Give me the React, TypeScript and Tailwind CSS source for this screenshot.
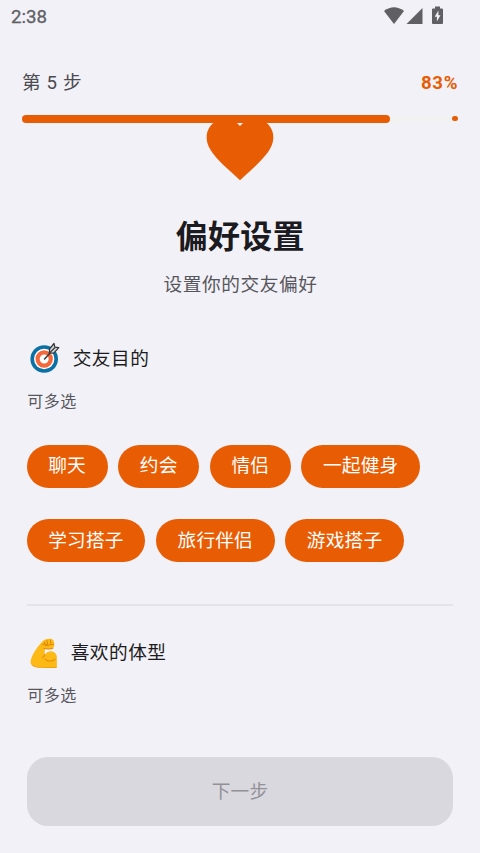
const FONT = "font-['Roboto','Noto_Sans_CJK_SC',sans-serif]";

function Chip({ label }: { label: string }) {
  return (
    <button className="flex h-[43px] items-center rounded-full bg-[#e85d04] px-[21.6px] text-[18.67px] leading-none tracking-[0.2px] text-white">
      <span className="mt-px">{label}</span>
    </button>
  );
}

function TargetIcon() {
  return (
    <svg className="mt-px h-[32px] w-[32px] shrink-0" viewBox="0 0 32 32" fill="none">
      <circle cx="15.2" cy="17" r="13.8" fill="#0b70a4" />
      <circle cx="15.2" cy="17" r="10.2" fill="#fff" />
      <circle cx="15.2" cy="17" r="6.6" stroke="#f4693b" strokeWidth="4.2" />
      <path d="M15.2 17.500 26 5.500" stroke="#3a3a3a" strokeWidth="1.500" />
      <path d="M20.300 11.200 20.600 6.800 25 1.500l.9 3.600 3.900.500-4.800 5.300z" fill="#c9cfd3" stroke="#333" strokeWidth="1.200" strokeLinejoin="round" />
      <path d="m20.300 11.200 5.600-5.600" stroke="#333" strokeWidth="1.200" />
    </svg>
  );
}

function BicepsIcon() {
  return (
    <svg className="h-[32px] w-[32px] shrink-0" viewBox="0 0 33 32" fill="none">
      <path d="M12.500 4.500C14 2.200 17 1.200 20 1.200c3.200 0 4.600 1.500 4.900 4.300.3 2.500 0 4.800-1.400 5.700-2 1.300-5.500.3-7.800.3-.8 2-.7 4-.2 6.200 2.500-3.800 6-4.200 8.900-2.700 2.300 1.200 3.300 3 3.300 5.500v10.200c-4 .8-8 .5-12 .1-4.500 0-8-.3-11.500-1.200C.8 28.600 0 26.200.9 23 2.700 16.500 7.700 9.500 12.500 4.500z" fill="#fdb915" />
      <path d="M13 7.500c1.500-1 2.500-1 4-.4M14.500 11.300c3 .2 6 1.200 9-.1M17.500 3.200l.8 4.300M21 2.600l.6 4.600M15 4.800l1.200 3.700 8-1.500" stroke="#df8a0c" strokeWidth="1.100" strokeLinecap="round" />
      <path d="M15.500 17.700c-.8 1.500-1.500 2.300-2.500 3M15.500 22.200c2.500 2.800 7.500 2.800 10.500.3" stroke="#e8940f" strokeWidth="1.200" strokeLinecap="round" />
      <path d="M1.500 27.500c2.500 2 6 2.700 10 2.600 5 .4 10 .6 16.200 0v1c-7 .6-11 .5-15 .1C7 31.100 2.500 30.500 1.500 27.500z" fill="#f29f0c" />
    </svg>
  );
}

export default function App() {
  return (
    <div className={`flex h-[853px] w-[480px] flex-col overflow-hidden bg-[#f2f1f7] ${FONT}`}>
      <header className="flex h-[33px] items-center justify-between pl-[11px] pr-[36px] text-[#606064]">
        <span className="mt-px text-[18.67px] leading-none [-webkit-text-stroke:0.3px]">2:38</span>
        <svg className="-mt-[2px] h-[22px] w-[60px]" viewBox="0 0 60 22" fill="currentColor">
          <path d="M0 6Q10 -1.500 20 6L10 19z" />
          <path d="M38.500 3v16h-16z" />
          <path fillRule="evenodd" d="M51 1.500h5v2h2q1 0 1 1V18q0 1-1 1h-9q-1 0-1-1V4.500q0-1 1-1h2zM54.400 5.500l-3.700 6.200h2.200v4.800l3.600-6.300h-2.100z" />
        </svg>
      </header>
      <div className="flex h-[81.5px] shrink-0 items-center justify-between pl-[22px] pr-[22px] pt-[19px] text-[18.67px] leading-none tracking-[0.67px]">
        <span className="text-[#4a4a50]">第 5 步</span>
        <span className="-mr-[0.2px] font-bold text-[#e85d04]">83%</span>
      </div>
      <div className="mx-[21.5px] flex h-[8.5px] shrink-0 items-center justify-between rounded-full bg-[#f2f2f2] pr-px">
        <div className="h-full w-[368.5px] rounded-full bg-[#e85d04]" />
        <div className="size-[5.3px] rounded-full bg-[#e85d04]" />
      </div>
      <main className="flex flex-1 flex-col overflow-hidden px-[26.67px]">
        <svg className="-mt-[14.2px] size-[80px] shrink-0 self-center" viewBox="0 0 24 24" fill="#e85d04">
          <path d="M12 21.350l-1.450-1.320C5.400 15.360 2 12.280 2 8.500 2 5.420 4.420 3 7.500 3c1.740 0 3.410.81 4.500 2.090C13.090 3.810 14.760 3 16.500 3 19.580 3 22 5.420 22 8.500c0 3.780-3.400 6.860-8.550 11.540L12 21.350z" />
        </svg>
        <h1 className="mt-[27.6px] pl-[0.6px] text-center text-[32px] font-bold leading-[42px] tracking-[0.3px] text-[#1a1a20]">偏好设置</h1>
        <p className="mt-[13.5px] pl-[1px] text-center text-[18.67px] leading-[27px] tracking-[0.6px] text-[#56565c]">设置你的交友偏好</p>
        <h2 className="mt-[42.5px] flex h-8 items-center gap-[12px] pl-[2px] text-[18.67px] tracking-[0.5px] text-[#1c1c20]">
          <TargetIcon />
          <span className="mt-[3px]">交友目的</span>
        </h2>
        <p className="mt-[17px] pl-[0.7px] text-[16px] leading-6 tracking-[0.5px] text-[#56565c]">可多选</p>
        <div className="mt-[30.1px] flex gap-[10.67px]">
          <Chip label="聊天" />
          <Chip label="约会" />
          <Chip label="情侣" />
          <Chip label="一起健身" />
        </div>
        <div className="mt-[31.4px] flex gap-[10.67px]">
          <Chip label="学习搭子" />
          <Chip label="旅行伴侣" />
          <Chip label="游戏搭子" />
        </div>
        <hr className="mt-[41.8px] border-t-2 border-[#e4e3e9]" />
        <h2 className="mt-[31.2px] flex h-8 items-center gap-[9px] pl-[3px] text-[18.67px] tracking-[0.5px] text-[#1c1c20]">
          <BicepsIcon />
          <span>喜欢的体型</span>
        </h2>
        <p className="mt-[15px] pl-[0.7px] text-[16px] leading-6 tracking-[0.5px] text-[#56565c]">可多选</p>
      </main>
      <footer className="px-[26.67px] pb-[27px]">
        <button className="flex h-[69px] w-full items-center justify-center rounded-[21px] bg-[#d9d8de] text-[18.67px] tracking-[0.13px] text-[#929198]">下一步</button>
      </footer>
    </div>
  );
}
